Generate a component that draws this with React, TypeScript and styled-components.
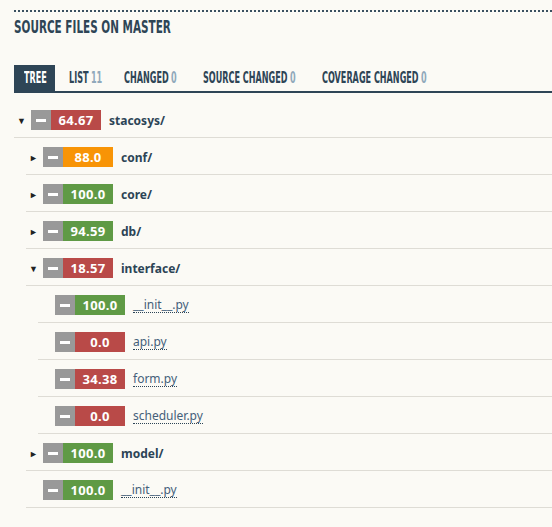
import React from "react";
import styled, { createGlobalStyle } from "styled-components";

const Global = createGlobalStyle`
  html, body { margin: 0; padding: 0; }
  body {
    background: #fbfaf5;
    font-family: "Noto Sans", "Open Sans", sans-serif;
    color: #2c4456;
  }
`;

const Page = styled.div`
  padding: 10px 0 0 14px;
  width: 538px;
`;

const DottedRule = styled.div`
  border-top: 2px dotted #3a5060;
  height: 0;
`;

const Title = styled.h2`
  margin: 5px 0 0 0;
  font-family: "DejaVu Sans Condensed", "Liberation Sans Narrow", sans-serif;
  font-weight: bold;
  font-size: 18px;
  line-height: 20px;
  color: #2e4556;
  transform: scaleX(0.645);
  transform-origin: left center;
  white-space: nowrap;
`;

const Tabs = styled.nav`
  display: flex;
  margin-top: 28px;
  border-bottom: 2px solid #2e4556;
  gap: 4px;
`;

const Tab = styled.div<{ $active?: boolean; $width: number }>`
  width: ${(p) => p.$width}px;
  flex: none;
  height: 26px;
  padding-left: 10px;
  box-sizing: border-box;
  display: flex;
  align-items: center;
  font-family: "DejaVu Sans Condensed", "Liberation Sans Narrow", sans-serif;
  font-weight: bold;
  font-size: 15px;
  white-space: nowrap;
  background: ${(p) => (p.$active ? "#2e4556" : "transparent")};
  color: ${(p) => (p.$active ? "#ffffff" : "#2e4556")};
`;

const TabLabel = styled.span`
  display: inline-block;
  transform: scaleX(0.6);
  transform-origin: left center;
`;

const Count = styled.span`
  color: #90a9bb;
  margin-left: 4px;
`;

const Rows = styled.div`
  margin-top: 8px;
`;

const Row = styled.div<{ $depth: number }>`
  display: flex;
  align-items: center;
  margin-left: ${(p) => p.$depth * 12}px;
  padding: 9px 0 7px 0;
  border-bottom: 1px solid #dedcd5;
`;

const Toggle = styled.span`
  width: 17px;
  flex: none;
  display: flex;
  justify-content: flex-start;
  padding-left: 3px;
  box-sizing: border-box;
  font-size: 9px;
  color: #222;
`;

const Badge = styled.div`
  display: flex;
  height: 20px;
  flex: none;
`;

const Minus = styled.div`
  width: 20px;
  height: 20px;
  background: #999999;
  display: flex;
  align-items: center;
  justify-content: center;
  &::after {
    content: "";
    width: 10px;
    height: 3px;
    background: #ffffff;
  }
`;

const Score = styled.div<{ $color: string }>`
  width: 50px;
  background: ${(p) => p.$color};
  color: #ffffff;
  font-weight: bold;
  font-size: 13px;
  letter-spacing: 0.3px;
  line-height: 20px;
  text-align: center;
`;

const DirName = styled.span`
  margin-left: 8px;
  font-weight: bold;
  font-size: 12px;
  color: #2c4456;
`;

const FileName = styled.span`
  margin-left: 8px;
  font-size: 12px;
  color: #45607a;
  border-bottom: 1px dotted #2c4456;
  line-height: 15px;
`;

const RED = "#b94a48";
const GREEN = "#5f9a45";
const ORANGE = "#f89406";

function colorFor(v: number) {
  if (v >= 90) return GREEN;
  if (v >= 80) return ORANGE;
  return RED;
}

type Item = {
  depth: number;
  score: string;
  name: string;
  dir?: boolean;
  open?: boolean;
};

const items: Item[] = [
  { depth: 0, score: "64.67", name: "stacosys/", dir: true, open: true },
  { depth: 1, score: "88.0", name: "conf/", dir: true },
  { depth: 1, score: "100.0", name: "core/", dir: true },
  { depth: 1, score: "94.59", name: "db/", dir: true },
  { depth: 1, score: "18.57", name: "interface/", dir: true, open: true },
  { depth: 2, score: "100.0", name: "__init__.py" },
  { depth: 2, score: "0.0", name: "api.py" },
  { depth: 2, score: "34.38", name: "form.py" },
  { depth: 2, score: "0.0", name: "scheduler.py" },
  { depth: 1, score: "100.0", name: "model/", dir: true },
  { depth: 1, score: "100.0", name: "__init__.py" },
];

const tabs = [
  { label: "TREE", active: true, width: 41 },
  { label: "LIST", count: "11", width: 51 },
  { label: "CHANGED", count: "0", width: 75 },
  { label: "SOURCE CHANGED", count: "0", width: 115 },
  { label: "COVERAGE CHANGED", count: "0", width: 128 },
];

export default function App() {
  return (
    <Page>
      <Global />
      <DottedRule />
      <Title>SOURCE FILES ON MASTER</Title>
      <Tabs>
        {tabs.map((t) => (
          <Tab key={t.label} $active={t.active} $width={t.width}>
            <TabLabel>
              {t.label}
              {t.count !== undefined && <Count>{t.count}</Count>}
            </TabLabel>
          </Tab>
        ))}
      </Tabs>
      <Rows>
        {items.map((it, i) => (
          <Row key={i} $depth={it.depth}>
            <Toggle>{it.dir ? (it.open ? "▼" : "►") : ""}</Toggle>
            <Badge>
              <Minus />
              <Score $color={colorFor(parseFloat(it.score))}>{it.score}</Score>
            </Badge>
            {it.dir ? <DirName>{it.name}</DirName> : <FileName>{it.name}</FileName>}
          </Row>
        ))}
      </Rows>
    </Page>
  );
}
